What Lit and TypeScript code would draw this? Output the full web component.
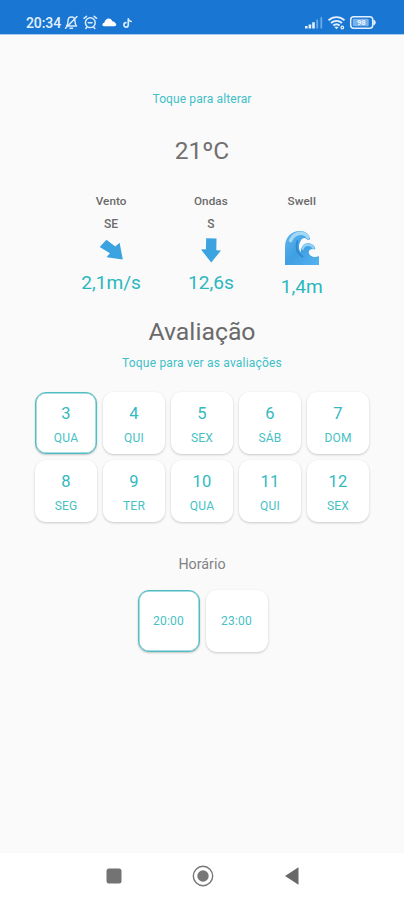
import { LitElement, html, css } from "lit";
import { customElement, property } from "lit/decorators.js";
import { classMap } from "lit/directives/class-map.js";

@customElement("status-bar")
class StatusBar extends LitElement {
  static styles = css`
    :host { display: flex; box-sizing: border-box; height: 35px; padding: 10px 27px 0 26px; background: #1976d2; border-bottom: 1px solid #a9cbee; color: #e4f1fd; }
    .time { font: 500 14px/26px Roboto, sans-serif; letter-spacing: -.1px; width: 38px; white-space: nowrap; }
    .left { display: block; width: 70px; height: 18px; margin-top: 4px; }
    .right { display: block; width: 74px; height: 18px; margin: 4px 0 0 auto; }
    .level { font: 700 7.5px Roboto, sans-serif; fill: #eef7ff; }
  `;
  render() {
    return html`
      <span class="time">20:34</span>
      <svg class="left" viewBox="64 14 70 18" fill="none" stroke="#d8eafd" stroke-width="1.5" stroke-linecap="round" stroke-linejoin="round">
        <path d="M66.500 26h10c-1.500-1.500-1.500-3-1.500-5 0-2.500-1.500-4-3.500-4s-3.500 1.500-3.500 4c0 2 0 3.500-1.500 5zM70 28.300h2.500M65.500 28.300 77 16.500"/>
        <circle cx="90.300" cy="22.700" r="4.900"/>
        <path d="M84 18.300l2.500-2M96.600 18.300l-2.500-2M88.300 22.700h3.800M86.800 27.200l-1 1.300M93.800 27.200l1 1.300"/>
        <path stroke="none" fill="#fff" d="M104.500 26.300c-2.800 0-2.800-3.400-.2-3.600.5-2.400 2.300-4.200 4.300-4.200 2 0 3.200 1.200 3.700 2.700 1.800.1 2.600.8 2.700 1.900 1.800.2 1.700 3.200-.5 3.200z"/>
        <path stroke-width="1.700" d="M128.300 18.800v6a2.200 2.200 0 1 1-2.400-2.100M128.300 19c.3 1.400 1.200 2.300 2.900 2.500"/>
      </svg>
      <svg class="right" viewBox="303 14 74 18" fill="none" stroke="#e4f1fd">
        <path stroke-width="2.600" d="M306.300 28.500v-2.500M309.900 28.500v-4M313.500 28.500v-6.300"/>
        <path stroke="#6aa9e6" stroke-width="1.800" d="M317.200 28.500v-9M321.300 28.500v-11.300"/>
        <path stroke-width="1.900" d="M328.500 20.300c4.700-4.200 11.300-4.200 16 0M331 23c3.300-2.800 7.700-2.800 11 0M333.300 25.500c2-1.600 4.400-1.600 6.400 0"/>
        <path stroke="none" fill="#e4f1fd" d="M334.300 26.700h4.400l-2.200 2.500z"/>
        <circle cx="342.300" cy="27.500" r="1.300" stroke-width="1.200"/>
        <rect x="350.700" y="16.700" width="22" height="11.600" rx="3" stroke-width="1.500"/>
        <rect x="352.700" y="18.700" width="16" height="7.600" rx="1" fill="#78b2ec" stroke="none"/>
        <path stroke="none" fill="#e4f1fd" d="M373.300 19.500c3.200 1 3.200 5 0 6z"/>
        <text class="level" x="357" y="25.300" stroke="none">98</text>
      </svg>`;
  }
}

const arrows: Record<string, unknown> = {
  SE: html`<svg width="26" height="22" viewBox="0 0 26 22"><path d="M1.700 8 8.400.800 17.300 7.500 21.600 3.700 24.800 20.500 8.600 18.300 11.900 14.200z" fill="#3ba3df"/></svg>`,
  S: html`<svg width="24" height="26" viewBox="0 0 24 26"><path d="M7.200 1.200 17.500 1.500 17.300 13.200 22 13.500 12.200 25.500 2 12.500 6.900 12.300z" fill="#3ba3df"/></svg>`,
};

const wave = html`<svg width="36" height="36" viewBox="0 0 36 36">
  <defs><linearGradient id="sea" x2="1" y2="1"><stop stop-color="#62b8ed"/><stop offset=".5" stop-color="#3f9fe2"/><stop offset="1" stop-color="#55b3f0"/></linearGradient></defs>
  <path fill="url(#sea)" d="M1 35V17C1 7 7.500 1 16 1c5.500 0 9.500 3 10 8-1 1.300-2.200 1-3.300 0-1.700-1.600-4.200-1-5.500 1C14.500 14 14 19.500 17 22c-.3-5 2.500-8.700 7-8.700 4.200 0 7 2.700 7.300 5.500-1.200 1.200-2.600 0-4.300.5-2.500.8-3 4-.8 6 2.500 2.200 5.500 2.300 8.800.7V35z"/>
  <path fill="none" stroke="#a3d8f4" stroke-width="3.600" stroke-linecap="round" d="M6.500 10.500C9 5.500 12.500 3.200 16.500 3.200c3.500 0 6 1.400 7.500 4"/>
  <path fill="none" stroke="#93d0f2" stroke-width="2.500" stroke-linecap="round" d="M18.800 18.500c.8-2.500 2.700-3.700 5.200-3.700 2.600 0 4.500 1.200 5.300 3"/>
  <path fill="none" stroke="#2f87d2" stroke-width="1.800" stroke-linecap="round" d="M13.500 11c-2 6-.5 12 5 15.500"/>
</svg>`;

@customElement("sea-reading")
class SeaReading extends LitElement {
  @property() label = "";
  @property() direction = "";
  @property() value = "";
  static styles = css`
    :host { display: flex; flex-direction: column; align-items: center; font-family: Roboto, sans-serif; }
    .label, .direction { font-size: 11.7px; font-weight: 500; line-height: 23px; height: 23px; color: #6a6a6a; letter-spacing: .1px; }
    .direction { font-size: 12px; }
    .icon { display: flex; height: 28px; align-items: center; justify-content: center; }
    .wave { height: 38px; padding-top: 17px; align-items: flex-start; }
    .value { font-size: 19.1px; line-height: 37px; height: 36px; color: #2bb7be; white-space: nowrap; }
    svg { display: block; }
  `;
  render() {
    const wide = !this.direction;
    return html`
      <div class="label">${this.label}</div>
      ${wide ? null : html`<div class="direction">${this.direction}</div>`}
      <div class=${classMap({ icon: true, wave: wide })}>${wide ? wave : arrows[this.direction]}</div>
      <div class="value">${this.value}</div>`;
  }
}

@customElement("pick-card")
class PickCard extends LitElement {
  @property() top = "";
  @property() bottom = "";
  @property({ type: Boolean }) selected = false;
  static styles = css`
    :host { display: block; width: 62px; height: 62px; }
    .card { box-sizing: border-box; height: 62px; display: flex; flex-direction: column; align-items: center; justify-content: center; background: #fff; border: 1.5px solid transparent; border-radius: 11px; box-shadow: 0 1px 2.5px rgba(0,0,0,.2); font-family: Roboto, sans-serif; color: #33b9bf; }
    .dated { padding-top: 5px; }
    .selected { border-color: #50bcc3; box-shadow: 0 1px 2px rgba(0,0,0,.22), inset 0 0 0 .5px #50bcc3; }
    .top { font-size: 16.5px; line-height: 25px; letter-spacing: .3px; }
    .bottom { font-size: 12px; line-height: 25px; color: #45c1c4; letter-spacing: .2px; }
  `;
  render() {
    return html`<div class=${classMap({ card: true, dated: !!this.top, selected: this.selected })}>
      ${this.top ? html`<span class="top">${this.top}</span>` : null}
      <span class="bottom">${this.bottom}</span>
    </div>`;
  }
}

@customElement("nav-bar")
class NavBar extends LitElement {
  static styles = css`
    :host { display: flex; height: 47px; background: #fff; justify-content: center; gap: 67px; align-items: center; padding: 0 0 2px 1px; box-sizing: border-box; }
    svg { display: block; width: 22px; height: 22px; }
  `;
  render() {
    return html`
      <svg viewBox="0 0 22 22"><rect x="3.500" y="3.500" width="15" height="15" rx="2.500" fill="#737373"/></svg>
      <svg viewBox="0 0 22 22"><circle cx="11" cy="11" r="9.700" fill="none" stroke="#777" stroke-width="1.400"/><circle cx="11" cy="11" r="5.700" fill="#777"/></svg>
      <svg viewBox="0 0 22 22"><path d="M4 11 17.500 2.300v17.400z" fill="#686868"/></svg>`;
  }
}

@customElement("app-root")
class AppRoot extends LitElement {
  static styles = css`
    :host { display: flex; flex-direction: column; width: 404px; height: 900px; background: #fafafa; font-family: Roboto, sans-serif; overflow: hidden; }
    main { flex: 1; display: flex; flex-direction: column; align-items: center; padding-top: 54px; }
    .hint { font-size: 12px; line-height: 20px; color: #3fc0c7; letter-spacing: .12px; }
    .temp { margin-top: 26px; font-size: 24.5px; line-height: 32px; color: #707070; }
    .readings { display: flex; gap: 47px; margin-top: 23px; }
    .title { margin-top: 11px; font-size: 24.8px; line-height: 34px; color: #6a6a6a; }
    .rating { margin-top: 4px; letter-spacing: .2px; }
    .days { display: grid; grid-template-columns: repeat(5, 62px); gap: 6px; margin-top: 19px; }
    .subtitle { margin-top: 30px; font-size: 14.3px; line-height: 24px; color: #828282; }
    .hours { display: flex; gap: 6px; margin-top: 14px; padding-left: 1px; }
  `;
  days = [["3", "QUA"], ["4", "QUI"], ["5", "SEX"], ["6", "SÁB"], ["7", "DOM"], ["8", "SEG"], ["9", "TER"], ["10", "QUA"], ["11", "QUI"], ["12", "SEX"]];
  render() {
    return html`
      <status-bar></status-bar>
      <main>
        <div class="hint">Toque para alterar</div>
        <div class="temp">21ºC</div>
        <div class="readings">
          <sea-reading label="Vento" direction="SE" value="2,1m/s"></sea-reading>
          <sea-reading label="Ondas" direction="S" value="12,6s"></sea-reading>
          <sea-reading label="Swell" value="1,4m"></sea-reading>
        </div>
        <div class="title">Avaliação</div>
        <div class="hint rating">Toque para ver as avaliações</div>
        <div class="days">
          ${this.days.map(([n, d], i) => html`<pick-card top=${n} bottom=${d} ?selected=${i === 0}></pick-card>`)}
        </div>
        <div class="subtitle">Horário</div>
        <div class="hours">
          <pick-card bottom="20:00" selected></pick-card>
          <pick-card bottom="23:00"></pick-card>
        </div>
      </main>
      <nav-bar></nav-bar>`;
  }
}
